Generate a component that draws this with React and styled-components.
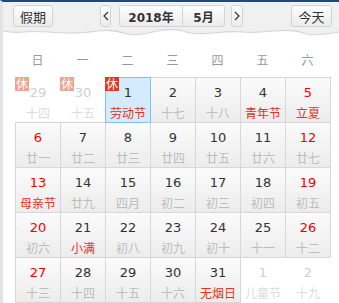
import React from 'react';
import styled, { createGlobalStyle, css } from 'styled-components';

const GlobalStyle = createGlobalStyle`
  html, body {
    margin: 0;
    padding: 0;
    background: #fff;
  }
  body {
    font-family: "DejaVu Sans", "Noto Sans CJK SC", sans-serif;
  }
`;

const Frame = styled.div`
  width: 339px;
  height: 303px;
  box-sizing: border-box;
  border-top: 2px solid #1d4a78;
  border-left: 3px solid #e3e3e3;
  background: #fff;
  overflow: hidden;
`;

const Header = styled.div`
  position: relative;
  height: 29px;
  background: #f0f0f0;
  display: flex;
  align-items: flex-start;
  padding: 3px 7px 0 10px;
  box-sizing: border-box;
`;

const Wave = styled.svg`
  position: absolute;
  left: 0;
  top: 27px;
  width: 336px;
  height: 9px;
`;

const Button = styled.button`
  height: 22px;
  box-sizing: border-box;
  border: 1px solid #d3d3d3;
  border-radius: 3px;
  background: linear-gradient(#fdfdfd, #ececec);
  color: #333;
  font-family: "Noto Sans CJK SC", sans-serif;
  font-size: 13px;
  padding: 0;
  display: flex;
  align-items: center;
  justify-content: center;
  width: ${(p) => p.$w}px;
  margin-left: ${(p) => p.$ml || 0}px;
`;

const Group = styled.div`
  display: flex;
  height: 22px;
  margin-left: ${(p) => p.$ml}px;
  border: 1px solid #d3d3d3;
  border-radius: 3px;
  box-sizing: border-box;
  background: linear-gradient(#fdfdfd, #ececec);
  overflow: hidden;
`;

const GroupPart = styled.div`
  width: ${(p) => p.$w}px;
  display: flex;
  align-items: center;
  justify-content: center;
  font-family: "DejaVu Sans", "Noto Sans CJK SC", sans-serif;
  font-size: 12px;
  font-weight: 700;
  color: #333;
  & + & {
    border-left: 1px solid #d3d3d3;
  }
`;

const Spacer = styled.div`
  flex: 1;
`;

const Body = styled.div`
  padding: 0 0 0 13px;
`;

const WeekRow = styled.div`
  display: grid;
  grid-template-columns: repeat(7, 45px);
  height: 46px;
  padding-top: 21px;
  box-sizing: border-box;
  margin-left: -1px;
`;

const WeekLabel = styled.div`
  text-align: center;
  font-family: "Noto Sans CJK SC", sans-serif;
  font-size: 12px;
  line-height: 16px;
  color: #999;
`;

const Grid = styled.div`
  display: grid;
  grid-template-columns: repeat(7, 44px);
  grid-auto-rows: 44px;
  gap: 1px;
  margin-top: 1px;
`;

const Cell = styled.div`
  position: relative;
  display: flex;
  flex-direction: column;
  align-items: center;
  ${(p) =>
    p.$in &&
    css`
      background: linear-gradient(#fbfbfb, #ececec);
      box-shadow: 0 0 0 1px #d7d7d7;
    `}
  ${(p) =>
    p.$sel &&
    css`
      background: #d3ebfc;
      box-shadow: 0 0 0 1px #7cc3f0;
      z-index: 1;
    `}
`;

const Day = styled.div`
  margin-top: 7px;
  font-size: 13px;
  line-height: 16px;
  color: ${(p) => (!p.$in ? '#cfcfcf' : p.$weekend ? '#f20000' : '#333')};
`;

const Lunar = styled.div`
  margin-top: 4px;
  font-family: "Noto Sans CJK SC", sans-serif;
  font-size: 12px;
  line-height: 16px;
  color: ${(p) => (!p.$in ? '#dcdcdc' : p.$fest ? '#e3321d' : '#bdbdbd')};
`;

const Badge = styled.span`
  position: absolute;
  left: -1px;
  top: -1px;
  width: 14px;
  height: 14px;
  display: flex;
  align-items: center;
  justify-content: center;
  background: ${(p) => (p.$in ? '#e2391a' : '#f2a38e')};
  color: #fff;
  font-family: "Noto Sans CJK SC", sans-serif;
  font-size: 12px;
  line-height: 14px;
`;

const weekdays = ['日', '一', '二', '三', '四', '五', '六'];

// [day, lunar, inMonth, festival, rest]
const days = [
  [29, '十四', false, false, true],
  [30, '十五', false, false, true],
  [1, '劳动节', true, true, true],
  [2, '十七', true],
  [3, '十八', true],
  [4, '青年节', true, true],
  [5, '立夏', true, true],
  [6, '廿一', true],
  [7, '廿二', true],
  [8, '廿三', true],
  [9, '廿四', true],
  [10, '廿五', true],
  [11, '廿六', true],
  [12, '廿七', true],
  [13, '母亲节', true, true],
  [14, '廿九', true],
  [15, '四月', true],
  [16, '初二', true],
  [17, '初三', true],
  [18, '初四', true],
  [19, '初五', true],
  [20, '初六', true],
  [21, '小满', true, true],
  [22, '初八', true],
  [23, '初九', true],
  [24, '初十', true],
  [25, '十一', true],
  [26, '十二', true],
  [27, '十三', true],
  [28, '十四', true],
  [29, '十五', true],
  [30, '十六', true],
  [31, '无烟日', true, true],
  [1, '儿童节', false, true],
  [2, '十九', false],
];

const App = () => {
  return (
    <>
      <GlobalStyle />
      <Frame>
        <Header>
          <Button $w={40}>假期</Button>
          <Button $w={11} $ml={47}>
            <svg width="6" height="10" viewBox="0 0 6 10">
              <path d="M5 1 L1 5 L5 9" fill="none" stroke="#333" strokeWidth="1.2" />
            </svg>
          </Button>
          <Group $ml={8}>
            <GroupPart $w={62}>2018年</GroupPart>
            <GroupPart $w={41}>5月</GroupPart>
          </Group>
          <Button $w={12} $ml={6}>
            <svg width="6" height="10" viewBox="0 0 6 10">
              <path d="M1 1 L5 5 L1 9" fill="none" stroke="#333" strokeWidth="1.2" />
            </svg>
          </Button>
          <Spacer />
          <Button $w={41}>今天</Button>
          <Wave viewBox="0 0 336 9" preserveAspectRatio="none">
            <path
              d="M0 2 Q10 4 20 3 T45 3 T70 4 T95 2 T120 4 T150 3 T180 2 T210 4 T240 3 T270 2 T300 4 T336 3 L336 0 L0 0 Z"
              fill="#f0f0f0"
            />
            <path
              d="M0 2 Q10 4 20 3 T45 3 T70 4 T95 2 T120 4 T150 3 T180 2 T210 4 T240 3 T270 2 T300 4 T336 3"
              fill="none"
              stroke="#d6d6d6"
              strokeWidth="1.2"
            />
          </Wave>
        </Header>
        <Body>
          <WeekRow>
            {weekdays.map((w) => (
              <WeekLabel key={w}>{w}</WeekLabel>
            ))}
          </WeekRow>
          <Grid>
            {days.map(([d, l, inM, fest, rest], i) => {
              const col = i % 7;
              const weekend = col === 0 || col === 6;
              return (
                <Cell key={i} $in={inM} $sel={inM && d === 1}>
                  {rest && <Badge $in={inM}>休</Badge>}
                  <Day $in={inM} $weekend={weekend}>
                    {d}
                  </Day>
                  <Lunar $in={inM} $fest={fest}>
                    {l}
                  </Lunar>
                </Cell>
              );
            })}
          </Grid>
        </Body>
      </Frame>
    </>
  );
};

export default App;
